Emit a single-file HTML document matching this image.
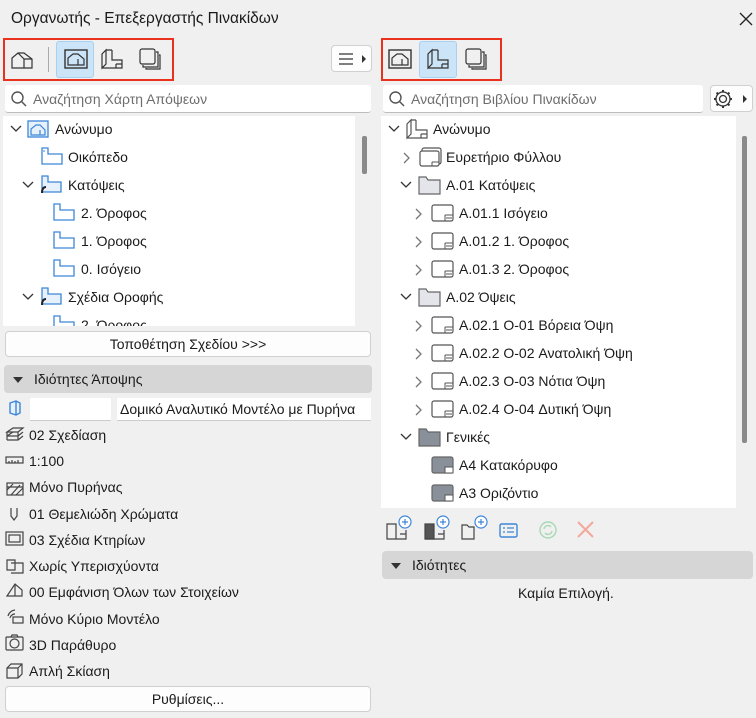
<!DOCTYPE html>
<html><head><meta charset="utf-8"><style>
*{box-sizing:border-box;margin:0;padding:0}
body{width:756px;height:718px;background:#f0f0f0;font-family:"Liberation Sans","DejaVu Sans",sans-serif;font-size:14px;color:#1a1a1a;position:relative;overflow:hidden}
.a{position:absolute}
.title{left:11px;top:10px;font-size:15.5px;color:#1a1a1a}
.red{border:2px solid #e8321e}
.sel{background:#cce4f7;border:1px solid #a8d0f0;border-radius:3px}
.field{background:#fff;border-bottom:1px solid #bdbdbd;border-radius:3px}
.btn{background:#fdfdfd;border:1px solid #d0d0d0;border-radius:4px;text-align:center;line-height:24px}
.hdr{background:#d6d6d6;border-radius:4px}
.tri{width:0;height:0;border-left:5px solid transparent;border-right:5px solid transparent;border-top:6px solid #333}
.ph{color:#6e6e6e}
.row{position:absolute;height:20px;line-height:20px;white-space:nowrap}
svg{position:absolute;overflow:visible}
</style></head><body>
<div class="a title">Οργανωτής - Επεξεργαστής Πινακίδων</div>
<svg style="left:739px;top:12px" width="14" height="14"><path d="M1 1L13 13M13 1L1 13" stroke="#222" stroke-width="1.3"/></svg>

<!-- LEFT -->
<div class="a red" style="left:3px;top:38px;width:171px;height:43px"></div>
<svg style="left:10px;top:50px" width="24" height="20"><path d="M2 18V8L8 3H14L22 9V18ZM8 3L14 9V18M14 9H22" fill="none" stroke="#333" stroke-width="1.2"/></svg>
<div class="a" style="left:48px;top:47px;width:1px;height:25px;background:#aaa"></div>
<div class="a sel" style="left:56px;top:41px;width:38px;height:37px"></div>
<svg style="left:64px;top:49px" width="24" height="20"><rect x="1" y="1" width="22" height="18" fill="none" stroke="#333" stroke-width="1.4"/><path d="M4 16V9L9 5H14L20 10V16ZM14 10V16" fill="none" stroke="#333" stroke-width="1.2"/></svg>
<svg style="left:100px;top:48px" width="24" height="22"><path d="M2 20V6L6 2V16ZM6 2H12M2 20H22V12H12V2M16 16H22M16 16V20" fill="none" stroke="#333" stroke-width="1.2"/></svg>
<svg style="left:139px;top:48px" width="22" height="22"><rect x="1" y="1" width="15" height="15" rx="2" fill="none" stroke="#333" stroke-width="1.2"/><path d="M17 4h2v15H4v-2M20 7h1v14H7v-1" fill="none" stroke="#333" stroke-width="1.2"/></svg>
<div class="a btn" style="left:331px;top:45px;width:41px;height:27px"></div>
<svg style="left:339px;top:52px" width="28" height="14"><path d="M0 2H14M0 7H14M0 12H14" stroke="#333" stroke-width="1.3"/><path d="M23 3L27 7L23 11Z" fill="#333"/></svg>

<div class="a field" style="left:5px;top:85px;width:366px;height:28px"></div>
<svg style="left:11px;top:91px" width="16" height="16"><circle cx="6.5" cy="6.5" r="5.5" fill="none" stroke="#555" stroke-width="1.4"/><path d="M10.5 10.5L15 15" stroke="#555" stroke-width="1.5"/></svg>
<div class="a ph" style="left:33px;top:91px">Αναζήτηση Χάρτη Απόψεων</div>

<div class="a" style="left:3px;top:116px;width:352px;height:210px;background:#fff;overflow:hidden">
</div>
<div class="a" style="left:362px;top:136px;width:5px;height:38px;background:#8a8a8a;border-radius:2px"></div>

<div class="a" style="left:0;top:116px;width:356px;height:210px;overflow:hidden">
<svg style="left:10px;top:9px" width="12" height="8"><path d="M1 1L6 6L11 1" fill="none" stroke="#333" stroke-width="1.3"/></svg>
<svg style="left:27px;top:4px" width="22" height="18"><rect x="1" y="1" width="20" height="16" fill="#e6f1fc" stroke="#3d86d8" stroke-width="1.3"/><path d="M4 15V9L9 5H13L18 10V15ZM13 10V15" fill="none" stroke="#3d86d8" stroke-width="1.2"/></svg>
<div class="row" style="left:55px;top:3px">Ανώνυμο</div>

<svg style="left:41px;top:31px" width="22" height="18"><path d="M1 1H7V7H21V17H1Z" fill="#fff" stroke="#3d86d8" stroke-width="1.3"/><path d="M3 3v2" stroke="#3d86d8"/></svg>
<div class="row" style="left:68px;top:31px">Οικόπεδο</div>

<svg style="left:22px;top:65px" width="12" height="8"><path d="M1 1L6 6L11 1" fill="none" stroke="#333" stroke-width="1.3"/></svg>
<svg style="left:40px;top:59px" width="22" height="20"><path d="M2 1H8V7H21V17H2Z" fill="#e6f1fc" stroke="#3d86d8" stroke-width="1.3"/><path d="M6 12Q2 12 2 18" fill="none" stroke="#222" stroke-width="2"/></svg>
<div class="row" style="left:68px;top:59px">Κατόψεις</div>

<svg style="left:53px;top:87px" width="22" height="18"><path d="M1 1H7V7H21V17H1Z" fill="#fff" stroke="#3d86d8" stroke-width="1.3"/></svg>
<div class="row" style="left:81px;top:87px">2. Όροφος</div>
<svg style="left:53px;top:115px" width="22" height="18"><path d="M1 1H7V7H21V17H1Z" fill="#fff" stroke="#3d86d8" stroke-width="1.3"/></svg>
<div class="row" style="left:81px;top:115px">1. Όροφος</div>
<svg style="left:53px;top:143px" width="22" height="18"><path d="M1 1H7V7H21V17H1Z" fill="#fff" stroke="#3d86d8" stroke-width="1.3"/></svg>
<div class="row" style="left:81px;top:143px">0. Ισόγειο</div>

<svg style="left:22px;top:177px" width="12" height="8"><path d="M1 1L6 6L11 1" fill="none" stroke="#333" stroke-width="1.3"/></svg>
<svg style="left:40px;top:171px" width="22" height="20"><path d="M2 1H8V7H21V17H2Z" fill="#e6f1fc" stroke="#3d86d8" stroke-width="1.3"/><path d="M6 12Q2 12 2 18" fill="none" stroke="#222" stroke-width="2"/></svg>
<div class="row" style="left:68px;top:171px">Σχέδια Οροφής</div>
<svg style="left:53px;top:199px" width="22" height="18"><path d="M1 1H7V7H21V17H1Z" fill="#fff" stroke="#3d86d8" stroke-width="1.3"/></svg>
<div class="row" style="left:81px;top:199px">2. Όροφος</div>
</div>

<div class="a btn" style="left:5px;top:331px;width:366px;height:26px">Τοποθέτηση Σχεδίου &gt;&gt;&gt;</div>
<div class="a hdr" style="left:4px;top:365px;width:368px;height:28px"></div>
<div class="a tri" style="left:13px;top:377px"></div>
<div class="a" style="left:34px;top:371px">Ιδιότητες Άποψης</div>

<svg style="left:8px;top:400px" width="14" height="16"><path d="M2 3L8 1L12 3V13L8 15L2 13Z M8 1V15" fill="#e6f1fc" stroke="#3d86d8" stroke-width="1.4"/></svg>
<div class="a" style="left:30px;top:398px;width:81px;height:23px;background:#fff;border-bottom:1px solid #ccc"></div>
<div class="a" style="left:117px;top:398px;width:254px;height:23px;background:#fff;border-bottom:1px solid #ccc;line-height:22px;padding-left:3px;white-space:nowrap;overflow:hidden">Δομικό Αναλυτικό Μοντέλο με Πυρήνα</div>

<svg style="left:5px;top:426px" width="20" height="200" fill="none" stroke="#444" stroke-width="1.2">
<path d="M2 6L8 2H18L13 6ZM2 10L8 6M2 10H13L18 6M2 14H13L18 10M2 6V14M13 6V14"/>
<rect x="1" y="31" width="17" height="6"/><path d="M4 35v2M7 34v3M10 35v2M13 34v3"/>
<rect x="2" y="57" width="16" height="12"/><path d="M2 64L8 58M6 69L15 59M11 69L18 62M2 61H18"/>
<path d="M6 82V90L9 94L12 90V82"/>
<rect x="1" y="106" width="17" height="13"/><rect x="4" y="109" width="11" height="7"/>
<path d="M2 134h8v10H2ZM6 137h12v10H6"/>
<path d="M2 170L10 158L17 164V170Z M10 158V170"/>
<path d="M3 190A8 8 0 0 1 10 184M5 192A5 5 0 0 1 10 188"/><rect x="8" y="191" width="10" height="6"/>
</svg>
<svg style="left:5px;top:634px" width="20" height="50" fill="none" stroke="#444" stroke-width="1.2"><rect x="1" y="3" width="17" height="13" rx="1"/><circle cx="9.5" cy="9.5" r="4.5"/><path d="M6 3L7 1H12L13 3"/><path d="M2 34L6 30H17V40L13 44H2ZM2 34H13V44M13 34L17 30"/></svg>

<div class="a" style="left:29px;top:427px">02 Σχεδίαση</div>
<div class="a" style="left:29px;top:453px">1:100</div>
<div class="a" style="left:29px;top:479px">Μόνο Πυρήνας</div>
<div class="a" style="left:29px;top:506px">01 Θεμελιώδη Χρώματα</div>
<div class="a" style="left:29px;top:532px">03 Σχέδια Κτηρίων</div>
<div class="a" style="left:29px;top:558px">Χωρίς Υπερισχύοντα</div>
<div class="a" style="left:29px;top:584px">00 Εμφάνιση Όλων των Στοιχείων</div>
<div class="a" style="left:29px;top:611px">Μόνο Κύριο Μοντέλο</div>
<div class="a" style="left:29px;top:637px">3D Παράθυρο</div>
<div class="a" style="left:29px;top:663px">Απλή Σκίαση</div>
<div class="a btn" style="left:5px;top:686px;width:366px;height:26px">Ρυθμίσεις...</div>

<!-- RIGHT -->
<div class="a red" style="left:381px;top:38px;width:121px;height:43px"></div>
<svg style="left:388px;top:49px" width="24" height="20"><rect x="1" y="1" width="22" height="18" fill="none" stroke="#333" stroke-width="1.4"/><path d="M4 16V9L9 5H14L20 10V16ZM14 10V16" fill="none" stroke="#333" stroke-width="1.2"/></svg>
<div class="a sel" style="left:419px;top:41px;width:38px;height:37px"></div>
<svg style="left:426px;top:48px" width="24" height="22"><path d="M2 20V6L6 2V16ZM6 2H12M2 20H22V12H12V2M16 16H22M16 16V20" fill="none" stroke="#333" stroke-width="1.2"/></svg>
<svg style="left:465px;top:48px" width="22" height="22"><rect x="1" y="1" width="15" height="15" rx="2" fill="none" stroke="#333" stroke-width="1.2"/><path d="M17 4h2v15H4v-2M20 7h1v14H7v-1" fill="none" stroke="#333" stroke-width="1.2"/></svg>

<div class="a field" style="left:383px;top:85px;width:320px;height:28px"></div>
<svg style="left:389px;top:91px" width="16" height="16"><circle cx="6.5" cy="6.5" r="5.5" fill="none" stroke="#555" stroke-width="1.4"/><path d="M10.5 10.5L15 15" stroke="#555" stroke-width="1.5"/></svg>
<div class="a ph" style="left:411px;top:91px">Αναζήτηση Βιβλίου Πινακίδων</div>
<div class="a btn" style="left:710px;top:85px;width:43px;height:27px"></div>
<svg style="left:713px;top:89px" width="38" height="20"><circle cx="10" cy="10" r="3.5" fill="none" stroke="#333" stroke-width="1.3"/><circle cx="10" cy="10" r="7" fill="none" stroke="#333" stroke-width="1.3"/><path d="M10 1v2M10 17v2M1 10h2M17 10h2M3.6 3.6l1.4 1.4M15 15l1.4 1.4M3.6 16.4L5 15M15 5l1.4-1.4" stroke="#333" stroke-width="2"/><path d="M30 6L34 10L30 14Z" fill="#333"/></svg>

<div class="a" style="left:381px;top:116px;width:355px;height:392px;background:#fff"></div>
<div class="a" style="left:742px;top:136px;width:5px;height:307px;background:#8a8a8a;border-radius:2px"></div>

<div class="a" style="left:378px;top:116px;width:358px;height:392px">
<svg style="left:10px;top:9px" width="12" height="8"><path d="M1 1L6 6L11 1" fill="none" stroke="#333" stroke-width="1.3"/></svg>
<svg style="left:27px;top:3px" width="24" height="20"><path d="M2 19V5L6 1V15ZM6 1H11M2 19H22V11H11V1M16 15H22M16 15V19" fill="none" stroke="#555" stroke-width="1.2"/></svg>
<div class="row" style="left:55px;top:3px">Ανώνυμο</div>

<svg style="left:25px;top:36px" width="8" height="12"><path d="M1 1L6 6L1 11" fill="none" stroke="#777" stroke-width="1.3"/></svg>
<svg style="left:41px;top:31px" width="24" height="20"><rect x="3" y="1" width="19" height="16" rx="2" fill="none" stroke="#555" stroke-width="1.2"/><rect x="1" y="4" width="19" height="15" rx="2" fill="#fff" stroke="#555" stroke-width="1.2"/><path d="M13 15H20M13 15V19" stroke="#555"/></svg>
<div class="row" style="left:68px;top:31px">Ευρετήριο Φύλλου</div>

<svg style="left:22px;top:65px" width="12" height="8"><path d="M1 1L6 6L11 1" fill="none" stroke="#333" stroke-width="1.3"/></svg>
<svg style="left:40px;top:59px" width="24" height="20"><path d="M1 2H8L10 5H22V19H1Z" fill="#e3e5ea" stroke="#666" stroke-width="1.2"/></svg>
<div class="row" style="left:68px;top:59px">A.01 Κατόψεις</div>

<svg style="left:37px;top:92px" width="8" height="12"><path d="M1 1L6 6L1 11" fill="none" stroke="#777" stroke-width="1.3"/></svg>
<svg style="left:53px;top:88px" width="24" height="20"><rect x="1" y="1" width="21" height="16" rx="2" fill="#fff" stroke="#555" stroke-width="1.2"/><path d="M14 11H22M14 11V17M15 14H21" stroke="#555"/></svg>
<div class="row" style="left:81px;top:87px">A.01.1 Ισόγειο</div>
<svg style="left:37px;top:120px" width="8" height="12"><path d="M1 1L6 6L1 11" fill="none" stroke="#777" stroke-width="1.3"/></svg>
<svg style="left:53px;top:116px" width="24" height="20"><rect x="1" y="1" width="21" height="16" rx="2" fill="#fff" stroke="#555" stroke-width="1.2"/><path d="M14 11H22M14 11V17M15 14H21" stroke="#555"/></svg>
<div class="row" style="left:81px;top:115px">A.01.2 1. Όροφος</div>
<svg style="left:37px;top:148px" width="8" height="12"><path d="M1 1L6 6L1 11" fill="none" stroke="#777" stroke-width="1.3"/></svg>
<svg style="left:53px;top:144px" width="24" height="20"><rect x="1" y="1" width="21" height="16" rx="2" fill="#fff" stroke="#555" stroke-width="1.2"/><path d="M14 11H22M14 11V17M15 14H21" stroke="#555"/></svg>
<div class="row" style="left:81px;top:143px">A.01.3 2. Όροφος</div>

<svg style="left:22px;top:177px" width="12" height="8"><path d="M1 1L6 6L11 1" fill="none" stroke="#333" stroke-width="1.3"/></svg>
<svg style="left:40px;top:171px" width="24" height="20"><path d="M1 2H8L10 5H22V19H1Z" fill="#e3e5ea" stroke="#666" stroke-width="1.2"/></svg>
<div class="row" style="left:68px;top:171px">A.02 Όψεις</div>

<svg style="left:37px;top:204px" width="8" height="12"><path d="M1 1L6 6L1 11" fill="none" stroke="#777" stroke-width="1.3"/></svg>
<svg style="left:53px;top:200px" width="24" height="20"><rect x="1" y="1" width="21" height="16" rx="2" fill="#fff" stroke="#555" stroke-width="1.2"/><path d="M14 11H22M14 11V17M15 14H21" stroke="#555"/></svg>
<div class="row" style="left:81px;top:199px">A.02.1 O-01 Βόρεια Όψη</div>
<svg style="left:37px;top:232px" width="8" height="12"><path d="M1 1L6 6L1 11" fill="none" stroke="#777" stroke-width="1.3"/></svg>
<svg style="left:53px;top:228px" width="24" height="20"><rect x="1" y="1" width="21" height="16" rx="2" fill="#fff" stroke="#555" stroke-width="1.2"/><path d="M14 11H22M14 11V17M15 14H21" stroke="#555"/></svg>
<div class="row" style="left:81px;top:227px">A.02.2 O-02 Ανατολική Όψη</div>
<svg style="left:37px;top:260px" width="8" height="12"><path d="M1 1L6 6L1 11" fill="none" stroke="#777" stroke-width="1.3"/></svg>
<svg style="left:53px;top:256px" width="24" height="20"><rect x="1" y="1" width="21" height="16" rx="2" fill="#fff" stroke="#555" stroke-width="1.2"/><path d="M14 11H22M14 11V17M15 14H21" stroke="#555"/></svg>
<div class="row" style="left:81px;top:255px">A.02.3 O-03 Νότια Όψη</div>
<svg style="left:37px;top:288px" width="8" height="12"><path d="M1 1L6 6L1 11" fill="none" stroke="#777" stroke-width="1.3"/></svg>
<svg style="left:53px;top:284px" width="24" height="20"><rect x="1" y="1" width="21" height="16" rx="2" fill="#fff" stroke="#555" stroke-width="1.2"/><path d="M14 11H22M14 11V17M15 14H21" stroke="#555"/></svg>
<div class="row" style="left:81px;top:283px">A.02.4 O-04 Δυτική Όψη</div>

<svg style="left:22px;top:317px" width="12" height="8"><path d="M1 1L6 6L11 1" fill="none" stroke="#333" stroke-width="1.3"/></svg>
<svg style="left:40px;top:311px" width="24" height="20"><path d="M1 2H8L10 5H22V19H1Z" fill="#8a909a" stroke="#666" stroke-width="1.2"/></svg>
<div class="row" style="left:68px;top:311px">Γενικές</div>

<svg style="left:53px;top:340px" width="24" height="20"><rect x="1" y="1" width="21" height="16" rx="2" fill="#8a909a" stroke="#666" stroke-width="1.2"/><path d="M14 11H22V17H14Z" fill="#fff" stroke="#555"/></svg>
<div class="row" style="left:81px;top:339px">A4 Κατακόρυφο</div>
<svg style="left:53px;top:368px" width="24" height="20"><rect x="1" y="1" width="21" height="16" rx="2" fill="#8a909a" stroke="#666" stroke-width="1.2"/><path d="M14 11H22V17H14Z" fill="#fff" stroke="#555"/></svg>
<div class="row" style="left:81px;top:367px">A3 Οριζόντιο</div>
</div>

<svg style="left:386px;top:515px" width="220" height="26" fill="none" stroke-width="1.2">
<path d="M1 9H10V24H1ZM1 24H20V15M14 19H20V24" stroke="#444"/><circle cx="19" cy="7" r="6" fill="#fff" stroke="#3d86d8"/><path d="M19 4v6M16 7h6" stroke="#3d86d8"/>
<path d="M39 9H48V24H39Z" fill="#555" stroke="#444"/><path d="M39 24H58V15M52 19H58V24" stroke="#444"/><circle cx="57" cy="7" r="6" fill="#fff" stroke="#3d86d8"/><path d="M57 4v6M54 7h6" stroke="#3d86d8"/>
<path d="M76 10H81L83 12H88V24H76Z" stroke="#444"/><circle cx="95" cy="7" r="6" fill="#fff" stroke="#3d86d8"/><path d="M95 4v6M92 7h6" stroke="#3d86d8"/>
<rect x="114" y="9" width="17" height="13" rx="1.5" stroke="#3d86d8" stroke-width="1.4"/><path d="M117 13h2M117 17h2M121 13h7M121 17h7" stroke="#3d86d8"/>
<circle cx="162" cy="15" r="8" stroke="#a8d8b4" stroke-width="1.4"/><path d="M158 14a4 4 0 0 1 7-2M166 16a4 4 0 0 1-7 2" stroke="#a8d8b4" stroke-width="1.4"/>
<path d="M192 7L207 22M207 7L192 22" stroke="#f2a89c" stroke-width="2"/>
</svg>

<div class="a hdr" style="left:382px;top:551px;width:371px;height:28px"></div>
<div class="a tri" style="left:391px;top:563px"></div>
<div class="a" style="left:412px;top:557px">Ιδιότητες</div>
<div class="a" style="left:518px;top:585px">Καμία Επιλογή.</div>
</body></html>
